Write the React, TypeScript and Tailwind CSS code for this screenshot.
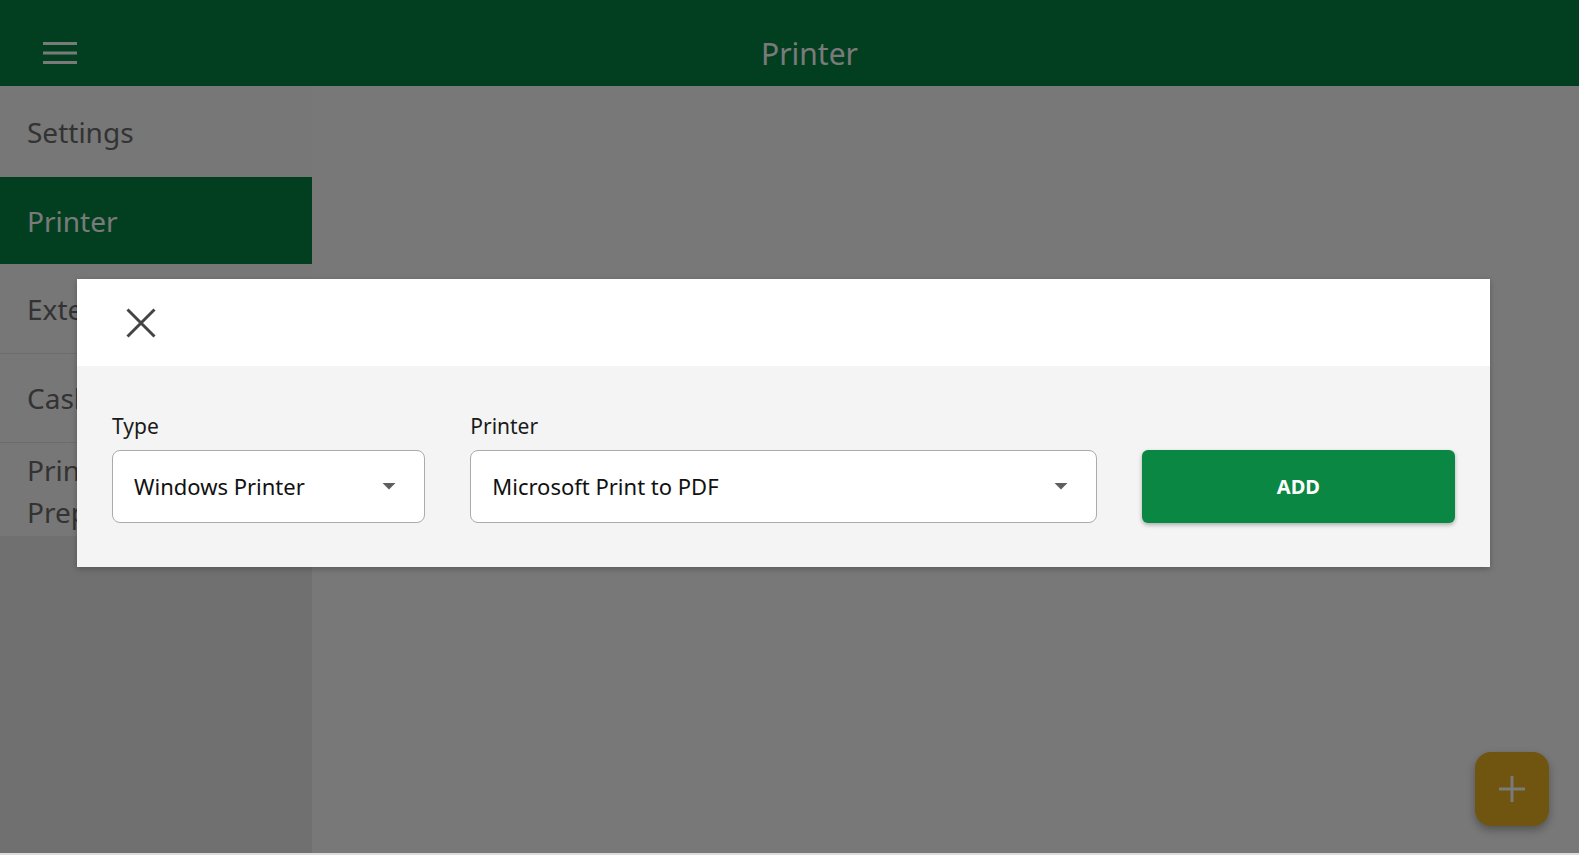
import React from "react";

const navItems = [
  { label: "Settings", h: "h-[91px]", border: false, active: false },
  { label: "Printer", h: "h-[87px]", border: false, active: true },
  { label: "External Display", h: "h-[90px]", border: true, active: false },
  { label: "Cash Drawer", h: "h-[89px]", border: true, active: false },
];

function Caret() {
  return (
    <svg width="14" height="8" viewBox="0 0 14 8" className="shrink-0">
      <path d="M0.5 0 L13.5 0 L7 6.5 Z" fill="#5f5f5f" />
    </svg>
  );
}

function SelectBox({ value }: { value: string }) {
  return (
    <div className="flex h-[73px] items-center justify-between rounded-[8px] border border-[#ababab] bg-white pl-[21px] pr-[28px]">
      <span className="text-[22px] text-[#111]">{value}</span>
      <Caret />
    </div>
  );
}

export default function App() {
  return (
    <div className="relative h-[855px] w-full overflow-hidden bg-[#dcdcdc] font-['Noto_Sans',sans-serif]">
      <div className="flex h-[853px] flex-col bg-[#f0f0f0]">
        <header className="flex h-[86px] shrink-0 items-center bg-[#027e40] pt-[21px] shadow-[0_1px_2px_rgba(0,0,0,0.2)]">
          <div className="w-[120px] pl-[43px]">
            <svg width="34" height="24" viewBox="0 0 34 24" className="-mt-[2px]">
              <rect x="0" y="1" width="34" height="3" fill="#f4f4f4" />
              <rect x="0" y="10.5" width="34" height="3" fill="#f4f4f4" />
              <rect x="0" y="20" width="34" height="3" fill="#f4f4f4" />
            </svg>
          </div>
          <div className="flex-1 pr-[80px] text-center text-[30px] text-[#f4f4f4]">Printer</div>
        </header>

        <div className="flex flex-1">
          <aside className="w-[312px] bg-[#e0e0e0]">
            {navItems.map((n) => (
              <div
                key={n.label}
                className={`flex ${n.h} items-center overflow-hidden whitespace-nowrap pl-[27px] ${
                  n.active ? "bg-[#027e40] text-[#f4f4f4]" : "bg-[#eeeeee] text-[#666]"
                } ${n.border ? "border-b border-[#d8d8d8]" : ""}`}
              >
                <span className="text-[28px] leading-[28px]">{n.label}</span>
              </div>
            ))}
            <div className="bg-[#eeeeee] pb-[3px] pl-[27px] pt-[6px] text-[#666]">
              <span className="block text-[28px] leading-[42px]">Printer</span>
              <span className="block text-[28px] leading-[42px]">Preparation</span>
            </div>
          </aside>

          <main className="relative flex-1 bg-[#f0f0f0]">
            <button className="absolute bottom-[27px] right-[30px] flex h-[74px] w-[74px] items-center justify-center rounded-[16px] bg-[#deaa20] shadow-[0_4px_8px_rgba(0,0,0,0.3)]">
              <svg width="28" height="28" viewBox="0 0 28 28">
                <rect x="12.5" y="1" width="3" height="26" fill="#f4f4f4" />
                <rect x="1" y="12.5" width="26" height="3" fill="#f4f4f4" />
              </svg>
            </button>
          </main>
        </div>
      </div>

      <div className="absolute inset-x-0 top-0 h-[853px] bg-black/50" />

      <div className="absolute inset-0 pl-[77px] pt-[279px]">
        <div className="w-[1413px] shadow-[0_2px_6px_rgba(0,0,0,0.25)]">
          <div className="flex h-[87px] items-center bg-white pl-[49px]">
            <svg width="30" height="30" viewBox="0 0 30 30">
              <path d="M1.5 1.5 L28.5 28.5 M28.5 1.5 L1.5 28.5" stroke="#444" strokeWidth="3" />
            </svg>
          </div>
          <div className="grid h-[201px] grid-cols-[1fr_2fr_1fr] items-end gap-x-[45px] bg-[#f4f4f4] px-[35px] pb-[44px]">
            <div>
              <div className="mb-[10px] text-[21px] leading-[28px] text-[#1a1a1a]">Type</div>
              <SelectBox value="Windows Printer" />
            </div>
            <div>
              <div className="mb-[10px] text-[21px] leading-[28px] text-[#1a1a1a]">Printer</div>
              <SelectBox value="Microsoft Print to PDF" />
            </div>
            <button className="h-[73px] rounded-[6px] bg-[#0a8843] text-[20px] font-bold text-white shadow-[0_2px_4px_rgba(0,0,0,0.3)]">
              ADD
            </button>
          </div>
        </div>
      </div>
    </div>
  );
}
